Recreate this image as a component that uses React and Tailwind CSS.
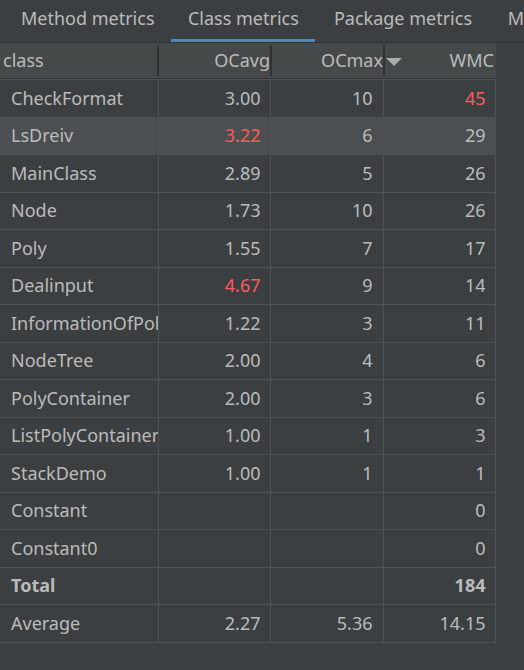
import React from 'react';

const rows = [
  { name: 'CheckFormat', avg: '3.00', max: '10', wmc: '45', wmcHot: true },
  { name: 'LsDreiv', avg: '3.22', max: '6', wmc: '29', avgHot: true, selected: true },
  { name: 'MainClass', avg: '2.89', max: '5', wmc: '26' },
  { name: 'Node', avg: '1.73', max: '10', wmc: '26' },
  { name: 'Poly', avg: '1.55', max: '7', wmc: '17' },
  { name: 'Dealinput', avg: '4.67', max: '9', wmc: '14', avgHot: true },
  { name: 'InformationOfPoly', avg: '1.22', max: '3', wmc: '11' },
  { name: 'NodeTree', avg: '2.00', max: '4', wmc: '6' },
  { name: 'PolyContainer', avg: '2.00', max: '3', wmc: '6' },
  { name: 'ListPolyContainer', avg: '1.00', max: '1', wmc: '3' },
  { name: 'StackDemo', avg: '1.00', max: '1', wmc: '1' },
  { name: 'Constant', avg: '', max: '', wmc: '0' },
  { name: 'Constant0', avg: '', max: '', wmc: '0' },
  { name: 'Total', avg: '', max: '', wmc: '184', bold: true },
  { name: 'Average', avg: '2.27', max: '5.36', wmc: '14.15' },
];

const tabs = [
  { label: 'Method metrics', w: 'w-[170px]' },
  { label: 'Class metrics', w: 'w-[146px]', active: true },
  { label: 'Package metrics', w: 'w-[178px]' },
];

const cell = 'h-[37.5px] border border-[#4f5355] whitespace-nowrap overflow-hidden';

export default function App() {
  return (
    <div className="w-[524px] h-[670px] overflow-hidden bg-[#3c3f41] text-[#bbbbbb] font-['Noto_Sans',sans-serif] text-[18px]">
      <div className="h-[43px] flex items-stretch pl-[4px] border-b border-[#313335]">
        {tabs.map(t => (
          <div key={t.label} className={`${t.w} flex items-center justify-center relative`}>
            <span className="-mt-[6px]">{t.label}</span>
            {t.active && <div className="absolute left-0 right-0 bottom-0 h-[3px] bg-[#4a88c7]" />}
          </div>
        ))}
        <div className="pl-[17px] flex items-center whitespace-nowrap">
          <span className="-mt-[6px]">M</span>
        </div>
      </div>

      <div className="w-[496px] h-[37px] flex bg-[#45494a] border-b-2 border-[#323436]">
        <div className="w-[157px] flex items-center pl-[3px]">class</div>
        <div className="w-[2px] my-[2px] bg-[#2f3133]" />
        <div className="w-[111px] flex items-center justify-end">OCavg</div>
        <div className="w-[2px] my-[2px] bg-[#2f3133]" />
        <div className="w-[111px] flex items-center justify-end relative">
          OCmax
          <svg className="absolute right-[-19px] top-[15px]" width="16" height="8" viewBox="0 0 16 8">
            <path d="M0 0 L16 0 L8 8 Z" fill="#a9acae" />
          </svg>
        </div>
        <div className="w-[2px] my-[2px] bg-[#2f3133]" />
        <div className="flex-1 flex items-center justify-end pr-[2px]">WMC</div>
      </div>

      <table className="table-fixed border-collapse w-[495px] -mt-[1px]">
        <colgroup>
          <col className="w-[158px]" />
          <col className="w-[112px]" />
          <col className="w-[113px]" />
          <col className="w-[112px]" />
        </colgroup>
        <tbody>
          {rows.map(r => (
            <tr key={r.name} className={r.selected ? 'bg-[#4b4f52]' : ''}>
              <td className={`${cell} border-l-0 pl-[11px] text-left ${r.bold ? 'font-bold' : ''}`}>
                {r.name}
              </td>
              <td className={`${cell} pr-[9px] text-right ${r.avgHot ? 'text-[#ff5a5a]' : ''}`}>{r.avg}</td>
              <td className={`${cell} pr-[10px] text-right`}>{r.max}</td>
              <td className={`${cell} pr-[9px] text-right ${r.wmcHot ? 'text-[#ff5a5a]' : ''} ${r.bold ? 'font-bold' : ''}`}>
                {r.wmc}
              </td>
            </tr>
          ))}
        </tbody>
      </table>
    </div>
  );
}
